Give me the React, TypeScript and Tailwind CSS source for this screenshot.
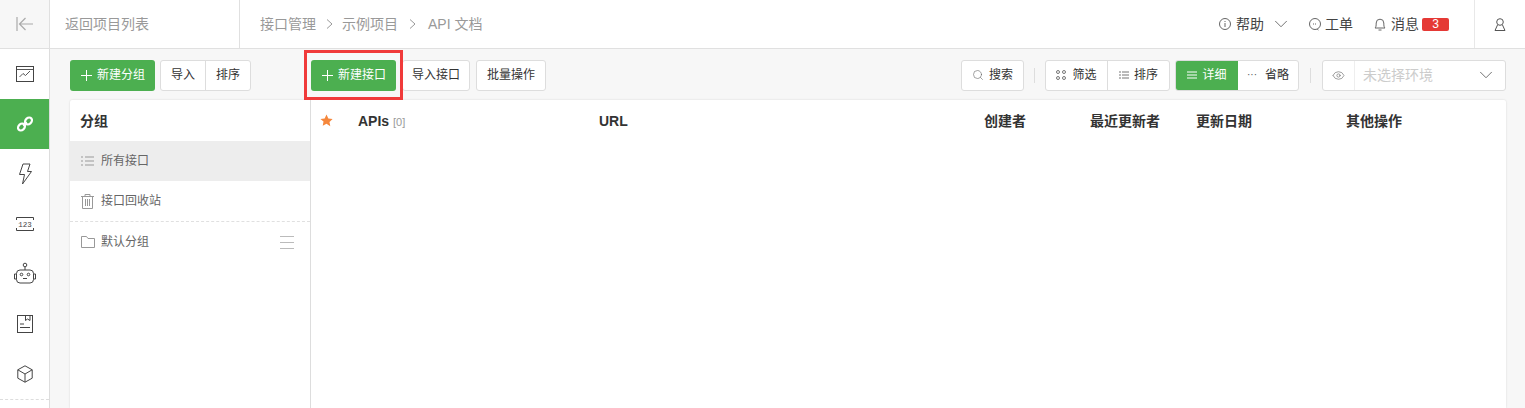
import React from 'react';
import { ChevronDown, Eye, Search } from 'lucide-react';

const Plus = () => (
  <svg width="11" height="11" viewBox="0 0 11 11" className="mr-[5px]" stroke="currentColor" fill="none">
    <path d="M5.5 0v11M0 5.5h11" />
  </svg>
);

const GreenButton = ({ label, width }: { label: string; width: string }) => (
  <button className={`flex h-[31px] items-center justify-center rounded-[3px] bg-[#4caf50] pl-px text-xs text-white ${width}`}>
    <Plus />
    {label}
  </button>
);

const NavIcon = ({ children, active }: { children: React.ReactNode; active?: boolean }) => (
  <div className={`flex h-[50px] items-center justify-center ${active ? 'bg-[#4caf50] text-white' : 'text-[#444]'}`}>
    {children}
  </div>
);

const Crumb = () => (
  <svg width="7" height="10" viewBox="0 0 7 10" fill="none" stroke="currentColor">
    <path d="M1 0.5l5 4.500-5 4.500" />
  </svg>
);

const navIcons = [
  <svg key="chart" width="18" height="16" viewBox="0 0 18 16" fill="none" stroke="currentColor">
    <rect x="0.5" y="0.5" width="17" height="15" />
    <path d="M0 3.500h18M3.500 11l3.500-3.500 2.500 2 4.500-4.500" strokeWidth="0.9" />
  </svg>,
  <svg key="link" width="18" height="18" viewBox="0 0 18 18" fill="none" stroke="currentColor" strokeWidth="2.2">
    <ellipse cx="5.500" cy="12" rx="3.800" ry="3" transform="rotate(-40 5.500 12)" />
    <ellipse cx="12.500" cy="6" rx="3.800" ry="3" transform="rotate(-40 12.500 6)" />
    <path d="M7 10.500l4-3" />
  </svg>,
  <svg key="bolt" width="14" height="22" viewBox="0 0 14 22" fill="none" stroke="currentColor">
    <path d="M5 1h7L9.500 8.500h4L4.500 21 6.500 11.500H1.500z" />
  </svg>,
  <svg key="num" width="18" height="14" viewBox="0 0 18 14" fill="none" stroke="currentColor">
    <path d="M0.5 3V0.500h17V3M0.500 11v2.500h17V11" />
    <text x="9" y="10" textAnchor="middle" fontSize="7.500" fill="currentColor" stroke="none" fontFamily="Liberation Mono">123</text>
  </svg>,
  <svg key="robot" width="24" height="24" viewBox="0 0 24 24" fill="none" stroke="currentColor">
    <circle cx="12" cy="3" r="1.800" />
    <path d="M12 5v3" />
    <rect x="3.500" y="8" width="17" height="13" rx="3.500" />
    <path d="M3.500 12H1.500v5h2M20.500 12h2v5h-2M10 16.500h4" />
    <circle cx="8.500" cy="12.500" r="1.300" />
    <circle cx="15.500" cy="12.500" r="1.300" />
  </svg>,
  <svg key="doc" width="16" height="18" viewBox="0 0 16 18" fill="none" stroke="currentColor">
    <rect x="0.5" y="0.5" width="15" height="17" />
    <path d="M8.500 0.500v5l2-1.500 2.500 1.500v-5M3 9h4M3 12.500h10" />
  </svg>,
  <svg key="box" width="16" height="18" viewBox="0 0 16 18" fill="none" stroke="currentColor">
    <path d="M8 0.800l7.200 4v8.400L8 17.200 0.800 13.200V4.800zM0.800 4.800L8 9l7.200-4.200M8 9v8.200" />
  </svg>,
];

const GroupRow = ({ icon, label, active, children }: { icon: React.ReactNode; label: string; active?: boolean; children?: React.ReactNode }) => (
  <div className={`flex h-10 items-center pl-[11px] pr-4 text-xs text-[#666] ${active ? 'bg-[#ededed]' : ''}`}>
    <span className="flex w-5 justify-start text-[#999]">{icon}</span>
    <span className="flex-1">{label}</span>
    {children}
  </div>
);

export default function App() {
  return (
    <div className="h-[408px] w-[1525px] overflow-hidden bg-[#f7f7f7] text-[#333] [font-family:'Liberation_Sans','Noto_Sans_CJK_SC',sans-serif]">
      <header className="flex h-[49px] border-b border-[#e0e0e0] bg-white">
        <div className="flex w-[50px] items-center justify-center border-r border-[#e0e0e0] bg-[#f7f7f7] text-[#aaa]">
          <svg width="18" height="14" viewBox="0 0 18 14" fill="none" stroke="currentColor" strokeWidth="1.200">
            <path d="M1 0v14M17 7H4M9.500 1L3.500 7l6 6" />
          </svg>
        </div>
        <div className="flex w-[190px] items-center border-r border-[#e0e0e0] pl-[15px] text-sm text-[#999]">返回项目列表</div>
        <nav className="flex items-center pl-5 text-sm text-[#999]">
          <span>接口管理</span>
          <span className="ml-[10px] mr-[9px]"><Crumb /></span>
          <span>示例项目</span>
          <span className="ml-[11px] mr-[12px]"><Crumb /></span>
          <span>API 文档</span>
        </nav>
        <div className="ml-auto flex items-center text-sm text-[#444]">
          <div className="flex items-center">
            <svg width="12" height="12" viewBox="0 0 12 12" fill="none" stroke="#666" className="mr-[5px]">
              <circle cx="6" cy="6" r="5.500" />
              <path d="M6 5v4M6 3v1" />
            </svg>
            帮助
            <ChevronDown size={22} strokeWidth={1} className="ml-[6px] text-[#666]" />
          </div>
          <div className="ml-[17px] flex items-center">
            <svg width="12" height="13" viewBox="0 0 12 13" fill="none" stroke="#666" className="mr-[4px]">
              <circle cx="6" cy="6" r="5.500" />
              <path d="M8 11l2 1.500M4 6h4" strokeDasharray="1 1" />
            </svg>
            工单
          </div>
          <div className="ml-[21px] flex items-center">
            <svg width="12" height="13" viewBox="0 0 12 13" fill="none" stroke="#666" className="mr-[5px]">
              <path d="M1 10c1-1 1.200-2 1.200-5a3.800 3.800 0 0 1 7.600 0c0 3 .2 4 1.200 5zM4.500 12h3" />
            </svg>
            消息
            <span className="ml-[3px] flex h-[13px] w-[27px] items-center justify-center rounded-[2px] bg-[#e53935] text-xs text-white">3</span>
          </div>
          <div className="ml-[25px] flex h-full w-[51px] items-center justify-center border-l border-[#e8e8e8]">
            <svg width="12" height="13" viewBox="0 0 12 13" fill="none" stroke="#555">
              <circle cx="6" cy="4" r="3.300" />
              <path d="M3.500 7L1 12.500h10L8.500 7" />
            </svg>
          </div>
        </div>
      </header>

      <div className="flex h-[359px]">
        <aside className="w-[50px] border-r border-[#ddd] bg-white">
          {navIcons.map((icon, i) => (
            <NavIcon key={i} active={i === 1}>{icon}</NavIcon>
          ))}
          <div className="border-t border-dashed border-[#ddd]" />
        </aside>

        <main className="flex-1 pl-5 pr-[19px]">
          <div className="relative flex h-[51px] items-center pt-[1px] text-xs">
            <GreenButton label="新建分组" width="w-[85px]" />
            <div className="ml-[5px] flex h-[31px] w-[91px] rounded-[3px] border border-[#ddd] bg-white">
              <span className="flex w-[45px] items-center justify-center border-r border-[#ddd]">导入</span>
              <span className="flex flex-1 items-center justify-center">排序</span>
            </div>

            <div className="ml-[60px]">
              <GreenButton label="新建接口" width="w-[85px]" />
            </div>
            <span className="ml-[6px] flex h-[31px] w-[68px] items-center justify-center rounded-[3px] border border-[#ddd] bg-white">导入接口</span>
            <span className="ml-[6px] flex h-[31px] w-[70px] items-center justify-center rounded-[3px] border border-[#ddd] bg-white">批量操作</span>

            {/* highlight box drawn over the screenshot */}
            <div className="absolute left-[234px] top-[1px] h-[50px] w-[99px] border-[3px] border-[#f03a3a]" />

            <div className="ml-auto flex items-center">
              <span className="flex h-[31px] w-[63px] items-center justify-center rounded-[3px] border border-[#ddd] bg-white">
                <Search size={12} strokeWidth={1.200} className="mr-[5px] text-[#666]" />
                搜索
              </span>
              <span className="mx-[10px] h-[15px] w-px bg-[#ddd]" />
              <div className="flex h-[31px] w-[125px] rounded-[3px] border border-[#ddd] bg-white">
                <span className="flex w-[62px] items-center justify-center border-r border-[#ddd]">
                  <svg width="10" height="10" viewBox="0 0 10 10" fill="none" stroke="#777" className="mr-[6px]">
                    <circle cx="2" cy="2" r="1.500" /><circle cx="8" cy="2" r="1.500" /><circle cx="2" cy="8" r="1.500" /><circle cx="8" cy="8" r="1.500" />
                  </svg>
                  筛选
                </span>
                <span className="flex flex-1 items-center justify-center">
                  <svg width="10" height="8" viewBox="0 0 10 8" fill="none" stroke="#777" className="mr-[5px]">
                    <path d="M0 1h2M3 1h7M0 4h2M3 4h7M0 7h2M3 7h7" />
                  </svg>
                  排序
                </span>
              </div>
              <div className="ml-[5px] flex h-[31px] w-[124px] overflow-hidden rounded-[3px] border border-[#ddd] bg-white">
                <span className="flex w-[62px] items-center justify-center bg-[#4caf50] text-white">
                  <svg width="10" height="8" viewBox="0 0 10 8" fill="none" stroke="currentColor" className="mr-[5px]">
                    <path d="M0 1h10M0 4h10M0 7h10" />
                  </svg>
                  详细
                </span>
                <span className="flex flex-1 items-center justify-center">
                  <span className="mr-[8px] text-[10px] leading-none text-[#555]">···</span>
                  省略
                </span>
              </div>
              <span className="mx-[11px] h-[15px] w-px bg-[#ddd]" />
              <div className="flex h-[31px] w-[184px] items-center rounded-[3px] border border-[#ddd] bg-white">
                <span className="flex h-full w-[31px] items-center justify-center">
                  <Eye size={13} strokeWidth={1.300} className="text-[#777]" />
                </span>
                <span className="h-full w-px bg-[#eee]" />
                <span className="ml-[8px] flex-1 text-sm text-[#ccc]">未选择环境</span>
                <ChevronDown size={22} strokeWidth={1} className="mr-[8px] text-[#666]" />
              </div>
            </div>
          </div>

          <section className="flex h-[308px] rounded-t-[2px] bg-white shadow-[0_0_2px_rgba(0,0,0,0.15)]">
            <div className="w-[241px] border-r border-[#ddd]">
              <div className="flex h-[41px] items-center pl-[10px] text-sm font-bold">分组</div>
              <GroupRow
                active
                label="所有接口"
                icon={
                  <svg width="13" height="10" viewBox="0 0 13 10" fill="none" stroke="currentColor">
                    <path d="M0 1h2M4 1h9M0 5h2M4 5h9M0 9h2M4 9h9" />
                  </svg>
                }
              />
              <GroupRow
                label="接口回收站"
                icon={
                  <svg width="13" height="15" viewBox="0 0 13 15" fill="none" stroke="currentColor">
                    <path d="M0 2.500h13M4 2.500V.5h5v2M1.500 2.500v12h10v-12M4.500 5v7M6.500 5v7M8.500 5v7" />
                  </svg>
                }
              />
              <div className="border-t border-dashed border-[#e0e0e0]" />
              <GroupRow
                label="默认分组"
                icon={
                  <svg width="14" height="12" viewBox="0 0 14 12" fill="none" stroke="currentColor">
                    <path d="M0.500 11.500V.5h5l1.500 2h6.500v9z" />
                  </svg>
                }
              >
                <svg width="14" height="13" viewBox="0 0 14 13" fill="none" stroke="#bbb">
                  <path d="M0 .5h14M0 6.500h14M0 12.500h14" />
                </svg>
              </GroupRow>
            </div>

            <div className="flex h-[41px] flex-1 items-center text-sm font-bold text-[#333]">
              <svg width="13" height="13" viewBox="0 0 24 24" fill="#f5873c" className="ml-[9px]">
                <path d="M12 1l3.400 7.300 7.900 1-5.800 5.500 1.500 7.900L12 17.800l-7 3.900 1.500-7.900L.7 9.300l7.900-1z" />
              </svg>
              <span className="ml-[25px] w-[241px]">
                APIs <span className="text-[11px] font-normal text-[#999]">[0]</span>
              </span>
              <span className="w-[385px]">URL</span>
              <span className="w-[106px]">创建者</span>
              <span className="w-[106px]">最近更新者</span>
              <span className="w-[150px]">更新日期</span>
              <span>其他操作</span>
            </div>
          </section>
        </main>
      </div>
    </div>
  );
}
